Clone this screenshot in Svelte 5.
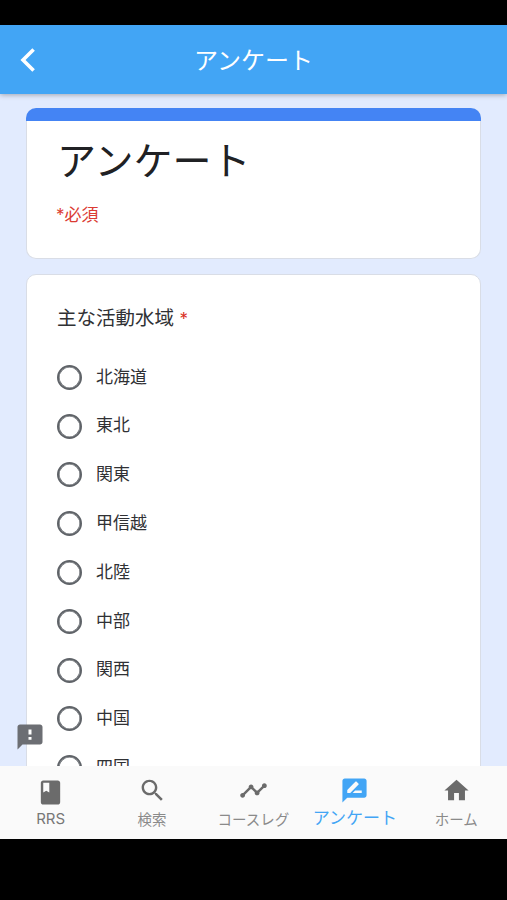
<script>
  const areas = ['北海道', '東北', '関東', '甲信越', '北陸', '中部', '関西', '中国', '四国'];

  const tabs = [
    {
      label: 'RRS',
      icon: 'M18 2H6c-1.1 0-2 .9-2 2v16c0 1.1.9 2 2 2h12c1.1 0 2-.9 2-2V4c0-1.1-.9-2-2-2zM6 4h5v8l-2.5-1.5L6 12V4z'
    },
    {
      label: '検索',
      icon: 'M15.5 14h-.79l-.28-.27C15.41 12.59 16 11.11 16 9.5 16 5.91 13.09 3 9.5 3S3 5.91 3 9.5 5.91 16 9.5 16c1.61 0 3.09-.59 4.23-1.57l.27.28v.79l5 4.99L20.49 19l-4.99-5zm-6 0C7.01 14 5 11.99 5 9.5S7.01 5 9.5 5 14 7.01 14 9.5 11.99 14 9.5 14z'
    },
    {
      label: 'コースレグ',
      icon: 'M23 8c0 1.1-.9 2-2 2-.18 0-.35-.02-.51-.07l-3.56 3.55c.05.16.07.34.07.52 0 1.1-.9 2-2 2s-2-.9-2-2c0-.18.02-.36.07-.52l-2.55-2.55c-.16.05-.34.07-.52.07s-.36-.02-.52-.07l-4.55 4.56c.05.16.07.33.07.51 0 1.1-.9 2-2 2s-2-.9-2-2 .9-2 2-2c.18 0 .35.02.51.07l4.56-4.55C8.02 9.36 8 9.18 8 9c0-1.1.9-2 2-2s2 .9 2 2c0 .18-.02.36-.07.52l2.55 2.55c.16-.05.34-.07.52-.07s.36.02.52.07l3.55-3.56C19.02 8.35 19 8.18 19 8c0-1.1.9-2 2-2s2 .9 2 2z'
    },
    {
      label: 'アンケート',
      active: true,
      icon: 'M20 2H4c-1.1 0-1.99.9-1.99 2L2 22l4-4h14c1.1 0 2-.9 2-2V4c0-1.1-.9-2-2-2zM6 14v-2.47l6.88-6.88c.2-.2.51-.2.71 0l1.77 1.77c.2.2.2.51 0 .71L8.47 14H6zm12 0h-7.5l2-2H18v2z'
    },
    {
      label: 'ホーム',
      icon: 'M10 20v-6h4v6h5v-8h3L12 3 2 12h3v8z'
    }
  ];

  let selected = $state('');
</script>

<div class="screen">
  <header>
    <button class="back" aria-label="戻る">
      <svg viewBox="0 0 18 26" width="18" height="26">
        <path d="M14.6 2.4 4 13l10.6 10.6" fill="none" stroke="currentColor" stroke-width="3.6" />
      </svg>
    </button>
    <h1>アンケート</h1>
  </header>

  <main>
    <section class="card intro">
      <h2>アンケート</h2>
      <p>*必須</p>
    </section>

    <section class="card question">
      <h3>主な活動水域 <span>*</span></h3>
      {#each areas as area}
        <label>
          <input type="radio" name="area" value={area} bind:group={selected} />
          <span>{area}</span>
        </label>
      {/each}
    </section>

    <svg class="report" viewBox="0 0 24 24">
      <path d="M20 2H4c-1.1 0-1.99.9-1.99 2L2 22l4-4h14c1.1 0 2-.9 2-2V4c0-1.1-.9-2-2-2z" />
      <path class="mark" d="M10.8 6h2.4v4h-2.4zM10.8 12h2.4v2.2h-2.4z" />
    </svg>
  </main>

  <nav>
    {#each tabs as tab}
      <button class="tab" class:active={tab.active}>
        <svg viewBox="0 0 24 24"><path d={tab.icon} /></svg>
        <span>{tab.label}</span>
      </button>
    {/each}
  </nav>
</div>

<style>
  :global(body) {
    background: #000;
  }

  .screen {
    box-sizing: border-box;
    display: flex;
    flex-direction: column;
    height: 900px;
    padding: 25px 0 61px;
    overflow: hidden;
    background: #000;
    font-family: Inter, "Noto Sans CJK JP", sans-serif;
    font-weight: 400;
  }

  h1, h2, h3, p {
    margin: 0;
    font-weight: 400;
  }

  button {
    padding: 0;
    border: 0;
    background: none;
    font-family: inherit;
  }

  header {
    position: relative;
    z-index: 1;
    display: grid;
    grid-template-columns: 56px 1fr 56px;
    align-items: center;
    flex: none;
    height: 69px;
    background: #42a5f5;
    color: #fff;
    box-shadow: 0 1px 5px rgba(0, 0, 0, 0.3);
  }

  .back {
    display: flex;
    justify-content: center;
    color: #fff;
  }

  h1 {
    padding-top: 2px;
    font-size: 24px;
    line-height: 36px;
    text-align: center;
  }

  main {
    position: relative;
    display: flex;
    flex-direction: column;
    gap: 15px;
    flex: 1;
    min-height: 0;
    padding: 14px 26px 0;
    overflow: hidden;
    background: #e2ebfe;
  }

  .card {
    box-sizing: border-box;
    flex: none;
    padding: 0 30px;
    border: 1px solid #d9dde6;
    border-radius: 10px;
    background: #fff;
  }

  .intro {
    position: relative;
    height: 151px;
    border-top: 0;
  }

  .intro::before {
    content: '';
    position: absolute;
    top: 0;
    left: -1px;
    right: -1px;
    height: 12.5px;
    border-radius: 10px 10px 0 0;
    background: #4484f4;
  }

  h2 {
    padding-top: 24px;
    color: #202124;
    font-size: 39px;
    line-height: 58px;
  }

  .intro p {
    margin: 13px 0 0 -1px;
    color: #db3b33;
    font-size: 17px;
    line-height: 25px;
  }

  .question {
    padding-top: 27px;
  }

  h3 {
    margin-bottom: 18px;
    color: #303134;
    font-size: 19.5px;
    line-height: 32px;
  }

  h3 span {
    color: #d93025;
    font-size: 17px;
  }

  label {
    display: flex;
    align-items: center;
    gap: 14.5px;
    height: 48.8px;
    margin-left: -0.5px;
    color: #303134;
    font-size: 17px;
  }

  label span {
    margin-top: -4.5px;
  }

  input {
    box-sizing: border-box;
    appearance: none;
    width: 25px;
    height: 25px;
    margin: 0;
    border: 2px solid #5f6368;
    border-radius: 50%;
    box-shadow: inset 0 0 0 0.6px #5f6368;
  }

  .report {
    position: absolute;
    left: 15px;
    bottom: 14px;
    width: 30px;
    height: 30px;
    fill: #6c6e73;
  }

  .mark {
    fill: #fff;
  }

  nav {
    display: grid;
    grid-template-columns: repeat(5, 1fr);
    flex: none;
    height: 73px;
    background: #fafafa;
  }

  .tab {
    display: flex;
    flex-direction: column;
    align-items: center;
    gap: 5px;
    padding-top: 10px;
    color: #8a8a8a;
    font-size: 14.5px;
    line-height: 20px;
    white-space: nowrap;
  }

  .tab svg {
    width: 29px;
    height: 29px;
    fill: #6b6b6b;
  }

  .tab:first-child {
    gap: 2px;
    padding-top: 12px;
    color: #777;
    font-size: 15px;
  }

  .tab.active {
    gap: 3px;
    color: #42a5f5;
    font-size: 17px;
  }

  .tab.active svg {
    fill: #42a5f5;
  }
</style>
